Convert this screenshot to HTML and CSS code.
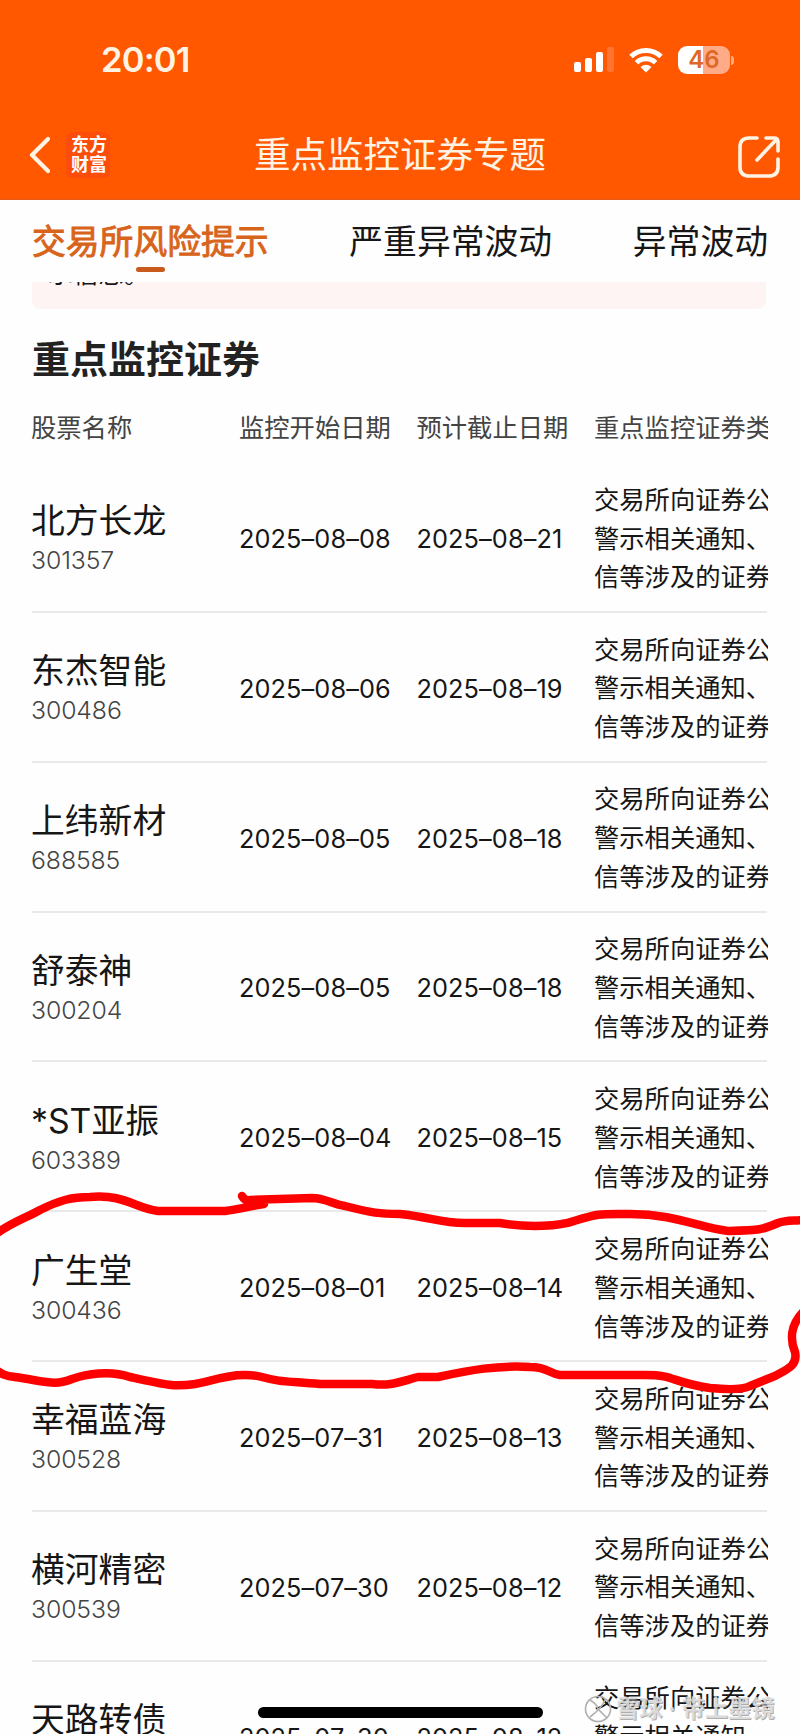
FILE: index.html
```
<!DOCTYPE html>
<html lang="zh-CN">
<head>
<meta charset="utf-8">
<title>重点监控证券专题</title>
<link rel="stylesheet" href="styles.css">
</head>
<body>
<div class="screen">
  <header class="header">
    <div class="status">
      <span class="time">20:01</span>
      <svg class="signal" width="40" height="26" viewBox="0 0 40 26">
        <rect x="0" y="15" width="7" height="10" rx="2" fill="#fff"/>
        <rect x="11" y="11" width="7" height="14" rx="2" fill="#fff"/>
        <rect x="22" y="5" width="7" height="20" rx="2" fill="#fff"/>
        <rect x="33" y="0" width="7" height="25" rx="2" fill="#ff7430"/>
      </svg>
      <svg class="wifi" width="34" height="26" viewBox="0 0 34 26" fill="none" stroke="#fff" stroke-width="5">
        <path d="M2 9.5A21.5 21.5 0 0 1 32 9.5"/>
        <path d="M7.5 15.7A13.5 13.5 0 0 1 26.500 15.7"/>
        <path d="M17 25.500L11.500 20Q17 15.500 22.500 20Z" fill="#fff" stroke="none"/>
      </svg>
      <div class="battery"><span class="level">46</span><i class="nub"></i></div>
    </div>
    <nav class="navbar">
      <svg class="back" width="22" height="38" viewBox="0 0 22 38" fill="none" stroke="#fff3e4" stroke-width="4.200" stroke-linecap="round" stroke-linejoin="round"><path d="M20 3L4 19L20 35"/></svg>
      <div class="logo"><span>东方</span><span>财富</span></div>
      <h1 class="title">重点监控证券专题</h1>
      <svg class="share" width="42" height="42" viewBox="0 0 42 42" fill="none" stroke="#fff3e4" stroke-width="3.600" stroke-linecap="round" stroke-linejoin="round"><path d="M19 2H11Q2 2 2 11V31Q2 40 11 40H31Q40 40 40 31V23M19 24L38 4M28 2H36Q40 2 40 6V15"/></svg>
    </nav>
  </header>
  <div class="tabs">
    <span class="tab active">交易所风险提示</span>
    <span class="tab">严重异常波动</span>
    <span class="tab">异常波动</span>
  </div>
  <div class="notice"><span>示信息。</span></div>
  <h2 class="section">重点监控证券</h2>
  <div class="columns head"><span>股票名称</span><span>监控开始日期</span><span>预计截止日期</span><span class="clip">重点监控证券类</span></div>
  <main class="list" id="list"></main>
  <svg class="scribble" width="800" height="220" viewBox="0 1180 800 220" fill="none" stroke="#fe0000" stroke-width="8.500" stroke-linecap="round" stroke-linejoin="round">
    <path d="M-4 1234C12 1222 26 1218 40 1210C60 1200 72 1197 90 1197C125 1194 134 1208 158 1211H225C240 1209 250 1206 264 1204L250 1201C243 1200 243 1197 242 1196M250 1200L312 1198C325 1198 332 1204 345 1206C372 1213 380 1214 400 1214C430 1217 440 1223 465 1223H500C530 1228 560 1226 574 1221C600 1213 600 1214 630 1214C675 1214 700 1228 728 1231C760 1230 762 1230 778 1223C786 1220 790 1221 804 1220"/>
    <path d="M804 1311C790 1325 790 1340 795 1352C798 1365 788 1369 775 1376L750 1386C740 1391 720 1389 710 1388C670 1382 676 1375 645 1375H560C550 1374 548 1367 530 1367C498 1365 470 1370 438 1377H418C396 1383 390 1386 372 1384H320C284 1381 280 1382 262 1377C240 1371 220 1379 195 1384C174 1387 166 1385 130 1377C110 1370 86 1374 72 1379C55 1386 48 1382 15 1377C5 1376 2 1374 -4 1370"/>
  </svg>
  <div class="home"></div>
  <div class="watermark">
    <svg width="28" height="28" viewBox="0 0 28 28" fill="none" stroke="#b0b0b0" stroke-width="1.600"><circle cx="14" cy="14" r="12.500"/><path d="M6 5Q13 9 14 14Q18 18 23 23M21 5Q17 14 6 22"/></svg>
    <span>雪球 · 带上墨镜</span>
  </div>
</div>
<script src="app.js"></script>
</body>
</html>
```

FILE: styles.css
```
* { box-sizing: border-box; }
body { margin: 0; background: #fff; }
.screen { position: relative; width: 800px; height: 1734px; overflow: hidden; background: #fefefe; color: #161616; font-family: Inter, "Noto Sans CJK SC", sans-serif; display: flex; flex-direction: column; }
.screen > * { flex-shrink: 0; }
.header { height: 200px; background: #ff5800; border-bottom: 1px solid #e55b18; color: #fff3e4; }
.status { height: 120px; padding: 0 66px 0 101px; display: flex; align-items: center; }
.time { font-size: 34.5px; font-weight: 600; line-height: 40px; width: 473px; letter-spacing: -0.8px; }
.wifi { margin-left: 15px; }
.battery { position: relative; margin-left: 15px; width: 52px; height: 28px; border-radius: 9px; background: linear-gradient(90deg, #fff 25px, #ffab88 25px); display: flex; align-items: center; justify-content: center; }
.level { font-size: 24px; line-height: 28px; font-weight: 600; color: #df6826; }
.nub { position: absolute; left: 53px; top: 10px; width: 3px; height: 9px; border-radius: 0 4px 4px 0; background: #ffab81; }
.navbar { height: 70px; padding: 0 20px 0 28px; display: flex; align-items: center; }
.logo { display: flex; flex-direction: column; margin-left: 16px; width: 44px; height: 46px; padding: 1px 0 0 5px; background: #fd4d0b; border-radius: 6px; font-family: "Noto Sans CJK SC", sans-serif; font-size: 18px; line-height: 20px; font-weight: 700; color: #fff; }
.title { margin: 0 0 0 144px; font-size: 36.5px; font-weight: 400; line-height: 50px; flex: 1; white-space: nowrap; }
.share { margin-top: 4px; }
.tabs { height: 82px; padding: 17px 32px 0 32px; display: flex; justify-content: space-between; font-size: 33.8px; line-height: 50px; }
.tab { position: relative; white-space: nowrap; }
.active { color: #d8641b; -webkit-text-stroke: 0.9px #d8641b; }
.active::after { content: ""; position: absolute; left: 104px; top: 50px; width: 29px; height: 5px; border-radius: 3px; background: #c95a1d; }
.notice { height: 27px; margin: 0 34px 0 32px; background: #fff4f4; border-radius: 0 0 8px 8px; overflow: hidden; font-size: 25.3px; line-height: 30px; padding-left: 16px; }
.notice span { display: block; margin-top: -23px; }
.section { margin: 25px 0 0 32px; font-size: 38px; line-height: 50px; font-weight: 700; color: #222; }
.columns { display: grid; grid-template-columns: 208px 177.500px 177.500px 174px; margin-left: 31px; align-items: center; }
.head { margin-top: 22px; height: 44px; font-size: 25.3px; line-height: 38px; color: #444; }
.clip { overflow: hidden; white-space: nowrap; }
.list { height: 1284px; margin-top: 13px; overflow: hidden; }
.row { position: relative; height: 149.850px; }
.row::after { content: ""; position: absolute; left: 1px; bottom: 0; width: 735px; height: 2px; background: #e9e9e9; }
.name { font-size: 33.8px; line-height: 45px; }
.code { font-size: 24.8px; line-height: 34px; color: #444; font-weight: 350; letter-spacing: -0.1px; }
.date { font-size: 25.3px; line-height: 38px; padding-top: 2px; white-space: nowrap; font-weight: 370; letter-spacing: 0.1px; }
.reason { font-size: 25.3px; line-height: 38.8px; padding-top: 2px; }
.scribble { position: absolute; left: 0; top: 1180px; }
.home { position: absolute; left: 258px; top: 1707px; width: 285px; height: 11px; border-radius: 6px; background: #000; }
.watermark { position: absolute; left: 584px; top: 1694px; display: flex; align-items: center; gap: 4px; font-size: 23.3px; line-height: 30px; font-weight: 700; color: rgba(225, 225, 225, 0.85); text-shadow: 1px 1px 0 rgba(120, 120, 120, 0.6); white-space: nowrap; }
```

FILE: app.js
```
const stocks = [
  ["北方长龙", "301357", "2025–08–08", "2025–08–21"],
  ["东杰智能", "300486", "2025–08–06", "2025–08–19"],
  ["上纬新材", "688585", "2025–08–05", "2025–08–18"],
  ["舒泰神", "300204", "2025–08–05", "2025–08–18"],
  ["*ST亚振", "603389", "2025–08–04", "2025–08–15"],
  ["广生堂", "300436", "2025–08–01", "2025–08–14"],
  ["幸福蓝海", "300528", "2025–07–31", "2025–08–13"],
  ["横河精密", "300539", "2025–07–30", "2025–08–12"],
  ["天路转债", "", "2025–07–30", "2025–08–12"]
];
document.getElementById("list").innerHTML = stocks.map(([name, code, start, end]) => `
  <div class="columns row">
    <div><div class="name">${name}</div><div class="code">${code || "&nbsp;"}</div></div>
    <span class="date">${start}</span>
    <span class="date">${end}</span>
    <div class="reason clip">交易所向证券公<br>警示相关通知、<br>信等涉及的证券</div>
  </div>`).join("");
```
